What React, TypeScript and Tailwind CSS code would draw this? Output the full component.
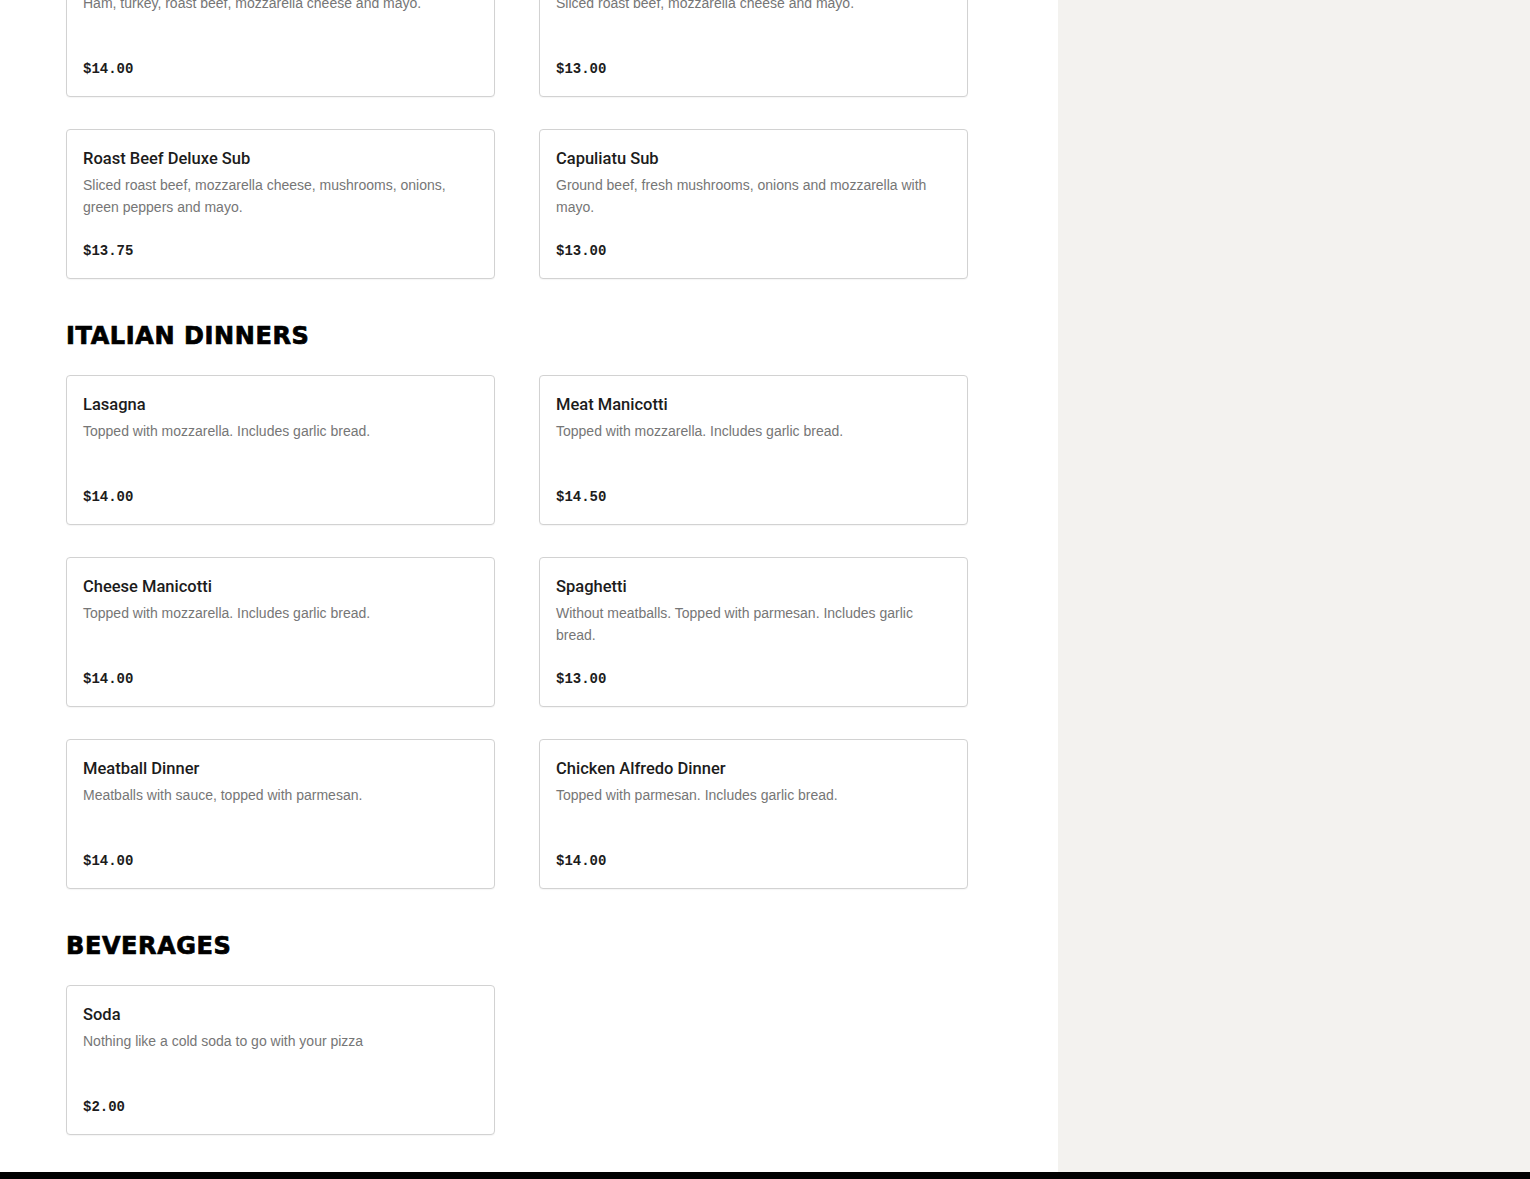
import React from "react";

type Item = { name: string; desc: string; price: string };

const subs: Item[] = [
  { name: "Italian Sub", desc: "Ham, turkey, roast beef, mozzarella cheese and mayo.", price: "$14.00" },
  { name: "Roast Beef Sub", desc: "Sliced roast beef, mozzarella cheese and mayo.", price: "$13.00" },
  { name: "Roast Beef Deluxe Sub", desc: "Sliced roast beef, mozzarella cheese, mushrooms, onions, green peppers and mayo.", price: "$13.75" },
  { name: "Capuliatu Sub", desc: "Ground beef, fresh mushrooms, onions and mozzarella with mayo.", price: "$13.00" },
];

const dinners: Item[] = [
  { name: "Lasagna", desc: "Topped with mozzarella. Includes garlic bread.", price: "$14.00" },
  { name: "Meat Manicotti", desc: "Topped with mozzarella. Includes garlic bread.", price: "$14.50" },
  { name: "Cheese Manicotti", desc: "Topped with mozzarella. Includes garlic bread.", price: "$14.00" },
  { name: "Spaghetti", desc: "Without meatballs. Topped with parmesan. Includes garlic bread.", price: "$13.00" },
  { name: "Meatball Dinner", desc: "Meatballs with sauce, topped with parmesan.", price: "$14.00" },
  { name: "Chicken Alfredo Dinner", desc: "Topped with parmesan. Includes garlic bread.", price: "$14.00" },
];

const beverages: Item[] = [
  { name: "Soda", desc: "Nothing like a cold soda to go with your pizza", price: "$2.00" },
];

function Card({ item }: { item: Item }) {
  return (
    <div className="flex h-[150px] flex-col rounded-[4px] border border-[#d2d2d2] bg-white px-4 pt-[17px] pb-[17px] shadow-[0_1px_1px_rgba(0,0,0,0.04)]">
      <div className="text-[16.5px] leading-6 font-medium text-[#1c1c1c] [font-family:Roboto,'Liberation_Sans',sans-serif]">
        {item.name}
      </div>
      <div className="mt-[3px] pr-4 text-[14px] leading-[22px] text-[#767676] [font-family:'Liberation_Sans',Arial,sans-serif]">
        {item.desc}
      </div>
      <div className="mt-auto text-[14px] leading-5 font-bold text-[#1c1c1c] [font-family:'Liberation_Mono','Courier_New',monospace]">
        {item.price}
      </div>
    </div>
  );
}

function Grid({ items }: { items: Item[] }) {
  return (
    <div className="grid grid-cols-[429px_429px] gap-x-[44px] gap-y-[32px]">
      {items.map((it) => (
        <Card key={it.name} item={it} />
      ))}
    </div>
  );
}

function Heading({ children }: { children: React.ReactNode }) {
  return (
    <h2 className="mt-[41px] mb-[23px] text-[24px] leading-8 font-bold tracking-[0.6px] text-black [font-family:'DejaVu_Sans',sans-serif] [-webkit-text-stroke:0.7px_black]">
      {children}
    </h2>
  );
}

export default function App() {
  return (
    <div className="min-h-[1179px] bg-white">
      <div className="flex h-[1172px] overflow-hidden">
        <main className="w-[1058px] shrink-0 bg-white">
          <div className="-mt-[53px] pl-[66px]">
            <Grid items={subs} />
            <Heading>ITALIAN DINNERS</Heading>
            <Grid items={dinners} />
            <Heading>BEVERAGES</Heading>
            <Grid items={beverages} />
          </div>
        </main>
        <aside className="flex-1 bg-[#f3f2ef]" />
      </div>
      <footer className="h-[60px] bg-black" />
    </div>
  );
}
